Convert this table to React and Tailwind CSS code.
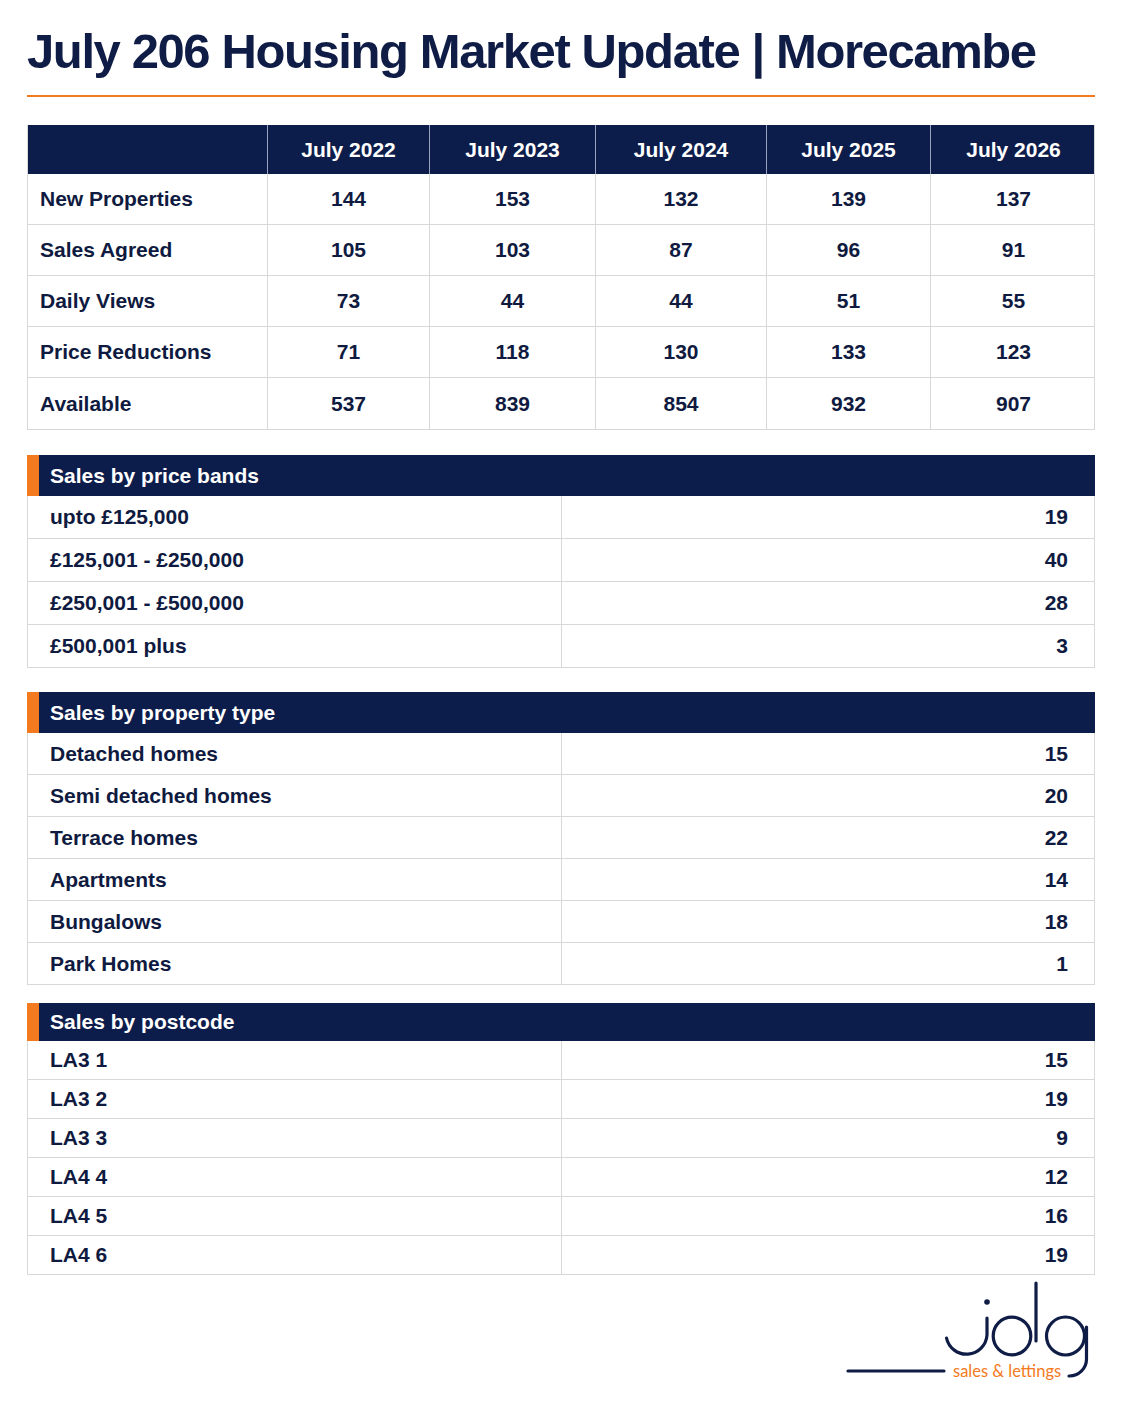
import React from "react";

const years = ["July 2022", "July 2023", "July 2024", "July 2025", "July 2026"];

const overview = [
  ["New Properties", 144, 153, 132, 139, 137],
  ["Sales Agreed", 105, 103, 87, 96, 91],
  ["Daily Views", 73, 44, 44, 51, 55],
  ["Price Reductions", 71, 118, 130, 133, 123],
  ["Available", 537, 839, 854, 932, 907],
];

const sections = [
  {
    title: "Sales by price bands",
    gap: "mt-[25px]",
    head: "h-[41px]",
    row: "h-[43px]",
    rows: [
      ["upto £125,000", 19],
      ["£125,001 - £250,000", 40],
      ["£250,001 - £500,000", 28],
      ["£500,001 plus", 3],
    ],
  },
  {
    title: "Sales by property type",
    gap: "mt-[24px]",
    head: "h-[41px]",
    row: "h-[42px]",
    rows: [
      ["Detached homes", 15],
      ["Semi detached homes", 20],
      ["Terrace homes", 22],
      ["Apartments", 14],
      ["Bungalows", 18],
      ["Park Homes", 1],
    ],
  },
  {
    title: "Sales by postcode",
    gap: "mt-[18px]",
    head: "h-[38px]",
    row: "h-[39px]",
    rows: [
      ["LA3 1", 15],
      ["LA3 2", 19],
      ["LA3 3", 9],
      ["LA4 4", 12],
      ["LA4 5", 16],
      ["LA4 6", 19],
    ],
  },
];

function Section({ s }) {
  return (
    <div className={s.gap}>
      <div className={`flex ${s.head} bg-[#0d1d4b]`}>
        <div className="w-[12px] bg-[#f47a20]" />
        <div className="flex items-center pl-[11px] text-white">{s.title}</div>
      </div>
      <div className="border-x border-[#d8d8d8]">
        {s.rows.map(([label, n]) => (
          <div key={label} className={`grid grid-cols-[534px_1fr] ${s.row} border-b border-[#d8d8d8]`}>
            <div className="flex items-center border-r border-[#d8d8d8] pl-[22px]">{label}</div>
            <div className="flex items-center justify-end pr-[26px]">{n}</div>
          </div>
        ))}
      </div>
    </div>
  );
}

// jdg mark, drawn from circles and strokes
function Logo() {
  return (
    <svg width="260" height="110" viewBox="835 1278 260 110" fill="none">
      <g stroke="#0f1c45" strokeWidth="3.2" strokeLinecap="round">
        <line x1="848" y1="1372" x2="944" y2="1372" />
        <path d="M987 1319 V1336 A20.5 20.5 0 0 1 946.5 1339" />
        <circle cx="1012" cy="1337" r="18.8" />
        <path d="M1036 1284 V1342" />
        <circle cx="1065.5" cy="1337" r="19" />
        <path d="M1086.5 1328 V1360 A17 17 0 0 1 1069 1377" />
      </g>
      <circle cx="987" cy="1303" r="2.8" fill="#0f1c45" />
      <text
        x="953"
        y="1378"
        fill="#f47a20"
        fontSize="16.5"
        fontFamily="Lato, 'Open Sans', sans-serif"
        fontWeight="400"
      >
        sales &amp; lettings
      </text>
    </svg>
  );
}

export default function App() {
  return (
    <div className="min-h-[1402px] bg-white px-[27px] pt-[23px] font-['Liberation_Sans',Arial,sans-serif] text-[21px] font-bold text-[#0f1a40]">
      <h1 className="text-[49px] leading-[56px] tracking-[-1.4px] text-[#0f1c45]">
        July 206 Housing Market Update | Morecambe
      </h1>
      <div className="mt-[16px] h-[2px] bg-[#f47a20]" />

      <div className="mt-[28px] border-x border-b border-[#d8d8d8]">
        <div className="grid h-[49px] grid-cols-[239px_162px_166px_171px_164px_166px] bg-[#0d1d4b] text-white">
          <div />
          {years.map((y) => (
            <div key={y} className="flex items-center justify-center border-l border-[#9aa3bd]">
              {y}
            </div>
          ))}
        </div>
        {overview.map((row, i) => (
          <div
            key={row[0]}
            className={`grid h-[51px] grid-cols-[239px_162px_166px_171px_164px_166px] ${i < overview.length - 1 ? "border-b" : ""} border-[#d8d8d8]`}
          >
            <div className="flex items-center pl-[12px]">{row[0]}</div>
            {row.slice(1).map((v, j) => (
              <div key={j} className="flex items-center justify-center border-l border-[#d8d8d8]">
                {v}
              </div>
            ))}
          </div>
        ))}
      </div>

      {sections.map((s) => (
        <Section key={s.title} s={s} />
      ))}

      <div className="mt-[2px] flex justify-end">
        <Logo />
      </div>
    </div>
  );
}
